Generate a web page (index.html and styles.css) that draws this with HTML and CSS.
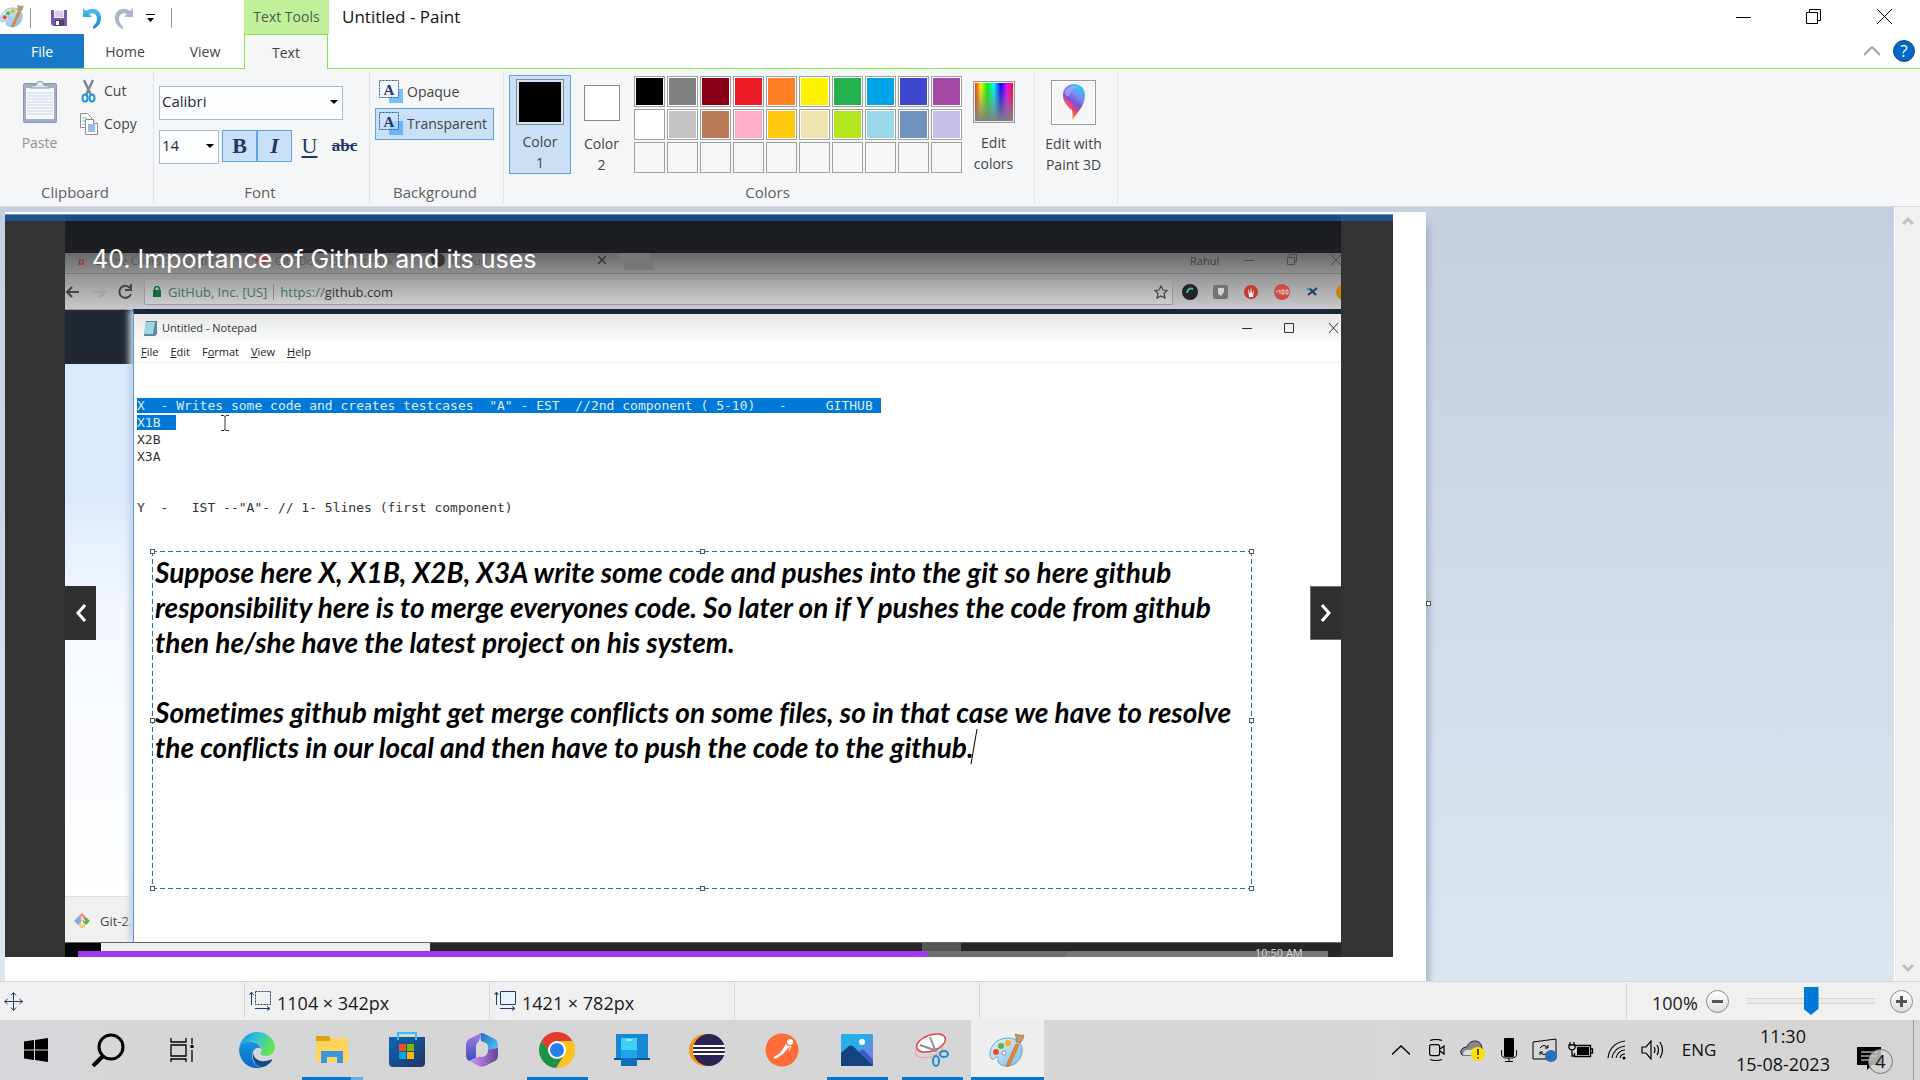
FILE: index.html
```html
<!DOCTYPE html>
<html lang="en">
<head>
<meta charset="utf-8">
<title>Untitled - Paint</title>
<link rel="stylesheet" href="styles.css">
</head>
<body>
<svg class="defs" aria-hidden="true">
  <defs>
    <linearGradient id="pal" x1="0" y1="0" x2="1" y2="1"><stop offset="0" stop-color="#eaf6fc"/><stop offset="1" stop-color="#7fb9dc"/></linearGradient>
    <linearGradient id="blueUp" x1="0" y1="0" x2="0" y2="1"><stop offset="0" stop-color="#4fc1f5"/><stop offset="1" stop-color="#0b80d3"/></linearGradient>
    <symbol id="palette" viewBox="0 0 36 34">
      <path d="M1 21C1 12 9 5 19 5s15 6 14 14c-1 9-8 14-15 14-5 0-9-2-9-5 0-2 1-4-1-4s-3 3-5 2-2-3-2-5z" fill="url(#pal)" stroke="#6aa5c8"/>
      <circle cx="7" cy="19" r="3" fill="#e8483c"/><circle cx="12" cy="13" r="3" fill="#53b848"/><circle cx="19" cy="10" r="3" fill="#f6b21b"/><circle cx="15" cy="20" r="2" fill="#fff" stroke="#88b"/>
      <path d="M27 11l3 1-10 21-2 1 0-3z" fill="#ee8a2c" stroke="#b9601a" stroke-width=".7"/>
      <path d="M26 1q5 2 9 1-1 6-4 8l-4-1q1-4-1-8z" fill="#c89a68" stroke="#8c6238" stroke-width=".6"/>
    </symbol>
  </defs>
</svg>
<div class="app">
  <header class="titlebar">
    <div class="quick">
      <svg class="app-icon" width="24" height="24"><use href="#palette"/></svg>
      <span class="bar"></span>
      <button class="qa save" aria-label="Save"><svg width="16" height="16" viewBox="0 0 16 16"><path d="M0 0h16v16H2l-2-2z" fill="#7d55b0"/><path d="M3 0h10v8H3z" fill="#f3f0fa"/><path d="M4 2h8M4 4h8M4 6h8" stroke="#b9acd4"/><path d="M4 10h9v6H4z" fill="#4f4470"/><path d="M5 11h3v4H5z" fill="#fff"/></svg></button>
      <button class="qa" aria-label="Undo"><svg width="20" height="22" viewBox="0 0 20 22"><path d="M1 1v9h9L7 7c4-2 8 0 8 5 0 4-3 6-4 8v2c5-2 8-6 8-11C19 3 11-1 4 4z" fill="url(#blueUp)"/></svg></button>
      <button class="qa" aria-label="Redo"><svg width="20" height="22" viewBox="0 0 20 22"><path d="M19 1v9h-9l3-3C9 5 5 7 5 12c0 4 3 6 4 8v2C4 20 1 16 1 11 1 3 9-1 16 4z" fill="#aab6cc"/></svg></button>
      <button class="qa more" aria-label="Customize Quick Access Toolbar"><svg width="9" height="8" viewBox="0 0 9 8"><path d="M0 0h9v1H0zM1 4h7L4.500 8z" fill="#000"/></svg></button>
      <span class="bar"></span>
    </div>
    <div class="context-title">Text Tools</div>
    <h1>Untitled - Paint</h1>
    <div class="win-buttons">
      <button aria-label="Minimize"><svg width="15" height="15"><path d="M0 8.500h15" stroke="#000"/></svg></button>
      <button aria-label="Restore"><svg width="15" height="15" fill="none" stroke="#000"><path d="M.5 3.500h11v11H.5zM3.500 3.500v-3h11v11h-3"/></svg></button>
      <button aria-label="Close"><svg width="15" height="15" stroke="#000"><path d="M0 0l15 15M15 0L0 15"/></svg></button>
    </div>
  </header>
  <nav class="tabs">
    <button class="file">File</button>
    <button>Home</button>
    <button>View</button>
    <button class="active">Text</button>
    <div class="tab-tools">
      <button aria-label="Minimize the Ribbon"><svg width="16" height="10" fill="none" stroke="#a5a5a5" stroke-width="2"><path d="M0 9l8-8 8 8"/></svg></button>
      <button class="help" aria-label="Help">?</button>
    </div>
  </nav>

  <section class="ribbon">
    <div class="group clipboard">
      <div class="group-body">
        <button class="big paste" disabled>
          <svg width="34" height="42" viewBox="0 0 34 42"><rect x=".5" y="2.500" width="33" height="39" rx="1" fill="#9fadc6" stroke="#8997b2"/><path d="M3 7h28v31H3z" fill="#f5f8fd"/><path d="M4 12h26M4 15h26M4 18h26M4 21h26M4 24h26M4 27h26M4 30h26M4 33h26" stroke="#ccd6e6"/><path d="M7 7q1-3 6-3 1-4 4-4t4 4q5 0 6 3z" fill="#dfe6f1" stroke="#8192ae"/></svg>
          <span>Paste</span>
        </button>
        <div class="stack">
          <button class="small"><svg width="20" height="24" viewBox="0 0 20 24"><path d="M5 1l7 15M14 1L7 16" stroke="#7e8794" stroke-width="2.500"/><ellipse cx="6" cy="19" rx="2.500" ry="3.500" fill="none" stroke="#1e96dc" stroke-width="2"/><ellipse cx="13" cy="19" rx="2.500" ry="3.500" fill="none" stroke="#1e96dc" stroke-width="2"/></svg>Cut</button>
          <button class="small"><svg width="20" height="24" viewBox="0 0 20 24" fill="#fff" stroke="#8d8d8d"><path d="M1.500 1.500h7l4 4v10h-11z"/><path d="M3 6h5M3 9h5M3 12h4" stroke="#79aee0"/><path d="M6.500 7.500h8l4 4v11h-12z"/><path d="M14.500 7.500v4h4"/><path d="M9 13h7M9 15h7M9 17h7M9 19h7" stroke="#2a7fd0"/></svg>Copy</button>
        </div>
      </div>
      <h2>Clipboard</h2>
    </div>

    <div class="group font">
      <div class="group-body column">
        <label class="combo family"><select aria-label="Font family"><option>Calibri</option></select></label>
        <div class="row">
          <label class="combo size"><select aria-label="Font size"><option>14</option></select></label>
          <div class="toggles">
            <button class="glyph bold on" aria-pressed="true">B</button>
            <button class="glyph italic on" aria-pressed="true">I</button>
            <button class="glyph under" aria-pressed="false">U</button>
            <button class="glyph strike" aria-pressed="false">abc</button>
          </div>
        </div>
      </div>
      <h2>Font</h2>
    </div>

    <div class="group background">
      <div class="group-body column">
        <button class="mode" aria-pressed="false"><svg width="24" height="24" viewBox="0 0 24 24"><path d="M10 9h14v14H10z" fill="#7cbdfb"/><rect x=".5" y=".5" width="19" height="17" fill="#f5f9fe" stroke="#1b5f9e" stroke-dasharray="2 1"/><text x="10" y="15" text-anchor="middle" class="serif-a">A</text></svg>Opaque</button>
        <button class="mode on" aria-pressed="true"><svg width="24" height="24" viewBox="0 0 24 24"><path d="M10 9h14v14H10z" fill="#6db6fb"/><rect x=".5" y=".5" width="19" height="17" fill="#cfe3fb" fill-opacity=".6" stroke="#1b5f9e" stroke-dasharray="2 1"/><text x="10" y="15" text-anchor="middle" class="serif-a">A</text></svg>Transparent</button>
      </div>
      <h2>Background</h2>
    </div>

    <div class="group colors">
      <div class="group-body">
        <button class="big color-one on"><span class="swatch black"></span><span>Color<br>1</span></button>
        <button class="big color-two"><span class="swatch white"></span><span>Color<br>2</span></button>
        <div class="palette">
          <button class="c1" aria-label="Black"></button><button class="c2" aria-label="Gray"></button><button class="c3" aria-label="Dark red"></button><button class="c4" aria-label="Red"></button><button class="c5" aria-label="Orange"></button><button class="c6" aria-label="Yellow"></button><button class="c7" aria-label="Green"></button><button class="c8" aria-label="Turquoise"></button><button class="c9" aria-label="Indigo"></button><button class="c10" aria-label="Purple"></button>
          <button class="c11" aria-label="White"></button><button class="c12" aria-label="Light gray"></button><button class="c13" aria-label="Brown"></button><button class="c14" aria-label="Rose"></button><button class="c15" aria-label="Gold"></button><button class="c16" aria-label="Light yellow"></button><button class="c17" aria-label="Lime"></button><button class="c18" aria-label="Light turquoise"></button><button class="c19" aria-label="Blue-gray"></button><button class="c20" aria-label="Lavender"></button>
          <button class="empty" aria-label="Custom 1"></button><button class="empty" aria-label="Custom 2"></button><button class="empty" aria-label="Custom 3"></button><button class="empty" aria-label="Custom 4"></button><button class="empty" aria-label="Custom 5"></button><button class="empty" aria-label="Custom 6"></button><button class="empty" aria-label="Custom 7"></button><button class="empty" aria-label="Custom 8"></button><button class="empty" aria-label="Custom 9"></button><button class="empty" aria-label="Custom 10"></button>
        </div>
        <button class="big edit"><span class="rainbow"></span><span>Edit<br>colors</span></button>
      </div>
      <h2>Colors</h2>
    </div>

    <div class="group paint3d">
      <div class="group-body">
        <button class="big p3d"><span class="p3d-frame"><svg width="26" height="37" viewBox="0 0 26 37"><defs><linearGradient id="drop" x1=".7" y1="0" x2=".3" y2="1"><stop offset="0" stop-color="#1fd0f2"/><stop offset=".3" stop-color="#7b8cf5"/><stop offset=".5" stop-color="#7a55d8"/><stop offset=".7" stop-color="#e2456f"/><stop offset="1" stop-color="#fbb000"/></linearGradient></defs><path d="M11 0c7 0 11 5 11 11 0 9-5 15-13 25 1-5 1-8-1-12C4 20 0 17 0 11 0 5 4 0 11 0z" transform="translate(2)" fill="url(#drop)"/><path d="M2 14c2 6 6 9 8 12 3-5-1-10-8-12z" fill="#f04a78"/><path d="M4 8c3-6 9-7 13-5-5 1-8 5-9 9-2 1-4 0-4-4z" fill="#b29cf8" opacity=".8"/></svg></span><span>Edit with<br>Paint 3D</span></button>
      </div>
    </div>
  </section>

  <main class="workspace">
    <div class="scroll-area">
      <div class="sheet">
        <div class="shot">
          <div class="video">
            <div class="browser">
              <div class="browser-top"></div>
              <div class="browser-tabs">
                <span class="udemy">u</span><span class="tab-name one">Online Courses - Anytime</span>
                <svg width="14" height="14" viewBox="0 0 14 14"><path d="M7 0l7 7-7 7-7-7z" fill="#9a4a40"/></svg><span class="tab-name two">Git - Downloading Pack</span>
                <svg width="14" height="14" viewBox="0 0 14 14"><circle cx="7" cy="7" r="7" fill="#333"/></svg><span class="tab-name three">GitHub</span>
                <svg class="tab-x" width="8" height="14" stroke="#333" stroke-width="1.500"><path d="M0 3l8 8M8 3l-8 8"/></svg>
                <span class="new-tab"></span>
                <span class="user">Rahul</span>
                <svg class="ctl" width="108" height="16" viewBox="0 0 108 16" fill="none" stroke="#4a4a4c"><path d="M0 7.500h10M43.500 4.500h7v7h-7zM45.500 4.500v-3h7v7h-2M87 2l10 10M97 2L87 12"/></svg>
              </div>
              <div class="address-row">
                <svg width="72" height="20" viewBox="0 0 72 20" fill="none" stroke="#444" stroke-width="2"><path d="M14 10H2M7 5l-5 5 5 5"/><path d="M28 10h12M35 5l5 5-5 5" stroke="#a2a2a4"/><path d="M65 6a6 6 0 1 0 1 6M66 2v6h-6"/></svg>
                <div class="address">
                  <svg width="8" height="11" viewBox="0 0 8 11"><path d="M0 4h8v7H0z" fill="#14693c"/><path d="M1.500 5V3a2.500 2.500 0 0 1 5 0v2" fill="none" stroke="#14693c" stroke-width="1.500"/></svg>
                  <span class="owner">GitHub, Inc. [US]</span><span class="divider"></span><span class="url"><i>https://</i>github.com</span>
                  <svg class="star" width="14" height="14" viewBox="0 0 14 14"><path d="M7 1l2 4 4 .5-3 3 1 4.500-4-2-4 2 1-4.500-3-3 4-.5z" fill="none" stroke="#444" stroke-width="1.200"/></svg>
                </div>
                <svg class="exts" width="166" height="18" viewBox="0 0 166 18"><circle cx="9" cy="9" r="8" fill="#25222b"/><path d="M6 10q1-6 6-4" stroke="#35c3a0" stroke-width="2" fill="none"/><rect x="32" y="2" width="15" height="14" rx="2" fill="#737375"/><path d="M37 5h6v4l-3 4-3-2z" fill="#d3d3d5"/><circle cx="70" cy="9" r="7" fill="#c3382f"/><path d="M67 5l2 6 1-7 1 7 2-4-1 7h-4z" fill="#fff"/><circle cx="101" cy="9" r="8" fill="#c94d48"/><path d="M95 9l4-2v4M101 7h2v4h-2zM105 7h2v4h-2z" stroke="#eec9c6" fill="none"/><path d="M126 6h3l3 3" stroke="#2b8fd0" stroke-width="2" fill="none"/><path d="M127 12l9-7M129 6l6 6" stroke="#223f5c" stroke-width="2" fill="none"/><circle cx="163" cy="9" r="8" fill="#c58215"/></svg>
              </div>
              <div class="browser-page"></div>
              <div class="downloads"><svg width="16" height="16" viewBox="0 0 16 16"><path d="M8 0l4 4-4 4-4-4z" fill="#e88b80"/><path d="M4 4l4 4-4 4-4-4z" fill="#7fa4e8"/><path d="M12 4l4 4-4 4-4-4z" fill="#71a862"/><path d="M8 8l4 4-4 4-4-4z" fill="#f0cf80"/><path d="M8 3v9M8 5l3 3" stroke="#fff"/></svg>Git-2.</div>
            </div>
            <div class="notepad">
              <div class="np-title">
                <svg width="15" height="15" viewBox="0 0 15 15"><path d="M3 0h11v13l-2 2H1z" fill="#5d8796"/><path d="M3 1h9l-2 12H1z" fill="#9fd4e4"/></svg>
                <span>Untitled - Notepad</span>
                <svg class="ctl" width="96" height="12" viewBox="0 0 96 12" fill="none" stroke="#333"><path d="M0 6.500h10M42.500 1.500h9v9h-9zM87 1l9 10M96 1l-9 10"/></svg>
              </div>
              <div class="np-menu"><span><u>F</u>ile</span><span><u>E</u>dit</span><span>F<u>o</u>rmat</span><span><u>V</u>iew</span><span><u>H</u>elp</span></div>
<pre class="np-text"><mark>X  - Writes some code and creates testcases  "A" - EST  //2nd component ( 5-10)   -     GITHUB </mark>
<mark>X1B  </mark>
X2B
X3A


Y  -   IST --"A"- // 1- 5lines (first component)</pre>
            </div>
            <svg class="ibeam" width="8" height="16" fill="none" stroke="#333"><path d="M0 .5h3l1 1 1-1h3M4 1v14M0 15.500h3l1-1 1 1h3"/></svg>
            <div class="rec-taskbar"><span class="rec-start"></span><span class="rec-search"></span><span class="rec-window"></span><span class="rec-clock">10:50 AM</span></div>
            <div class="progress"><span class="played"></span><span class="buffered"></span><span class="rest"></span></div>
            <p class="lecture">40. Importance of Github and its uses</p>
            <button class="nav prev" aria-label="Previous"><svg width="10" height="18" fill="none" stroke="#fff" stroke-width="3"><path d="M9 1L2 9l7 8"/></svg></button>
            <button class="nav next" aria-label="Next"><svg width="10" height="18" fill="none" stroke="#fff" stroke-width="3"><path d="M1 1l7 8-7 8"/></svg></button>
          </div>
        </div>

        <div class="textbox">
          <textarea aria-label="Text" spellcheck="false">Suppose here X, X1B, X2B, X3A write some code and pushes into the git so here github
responsibility here is to merge everyones code. So later on if Y pushes the code from github
then he/she have the latest project on his system.

Sometimes github might get merge conflicts on some files, so in that case we have to resolve
the conflicts in our local and then have to push the code to the github.</textarea>
          <i class="h tl"></i><i class="h tc"></i><i class="h tr"></i><i class="h ml"></i><i class="h mr"></i><i class="h bl"></i><i class="h bc"></i><i class="h br"></i>
          <svg class="caret" width="8" height="35"><path d="M7 0L1 35" stroke="#000"/></svg>
        </div>
        <i class="h sheet-handle"></i>
      </div>
    </div>
    <div class="scrollbar">
      <button aria-label="Scroll up"><svg width="12" height="10" fill="none" stroke="#bfbfbf" stroke-width="3"><path d="M1 8l5-5 5 5"/></svg></button>
      <button aria-label="Scroll down"><svg width="12" height="10" fill="none" stroke="#bfbfbf" stroke-width="3"><path d="M1 2l5 5 5-5"/></svg></button>
    </div>
  </main>

  <footer class="status">
    <div class="cell"><svg width="19" height="19" viewBox="0 0 19 19" fill="none" stroke="#1f3d66"><path d="M9.500 1v17M1 9.500h17M7 3.500l2.500-3 2.500 3M7 15.500l2.500 3 2.500-3M3.500 7l-3 2.500 3 2.500M15.500 7l3 2.500-3 2.500"/></svg></div>
    <div class="cell"><svg width="22" height="20" viewBox="0 0 22 20" fill="none" stroke="#1f3d66"><path d="M2.500 14V2M.5 4l2-3 2 3M6 17.500h14M18 15.500l3 2-3 2"/><path d="M6.500.5h15v13h-15z" stroke-dasharray="2 1"/></svg><span>1104 × 342px</span></div>
    <div class="cell"><svg width="22" height="20" viewBox="0 0 22 20" fill="none" stroke="#1f3d66"><path d="M2.500 14V2M.5 4l2-3 2 3M6 17.500h14M18 15.500l3 2-3 2"/><path d="M6.500.5h15v13h-15z" fill="#e6f3f8"/></svg><span>1421 × 782px</span></div>
    <div class="cell"></div>
    <div class="cell wide"></div>
    <div class="zoom">
      <label for="zoom">100%</label>
      <button aria-label="Zoom out"><svg width="11" height="11"><path d="M0 5.500h11" stroke="#555" stroke-width="3"/></svg></button>
      <input id="zoom" type="range" min="0" max="100" value="50">
      <button aria-label="Zoom in"><svg width="11" height="11"><path d="M0 5.500h11M5.500 0v11" stroke="#555" stroke-width="3"/></svg></button>
    </div>
  </footer>
</div>

<footer class="taskbar">
  <div class="apps">
    <button class="start" aria-label="Start"><svg width="24" height="24" viewBox="0 0 24 24"><path d="M0 3.500L10 2v9.500H0zM11 2l13-2v11.500H11zM0 12.500h10V22L0 20.500zM11 12.500h13V24l-13-2z"/></svg></button>
    <button class="search" aria-label="Search"><svg width="34" height="34" viewBox="0 0 34 34" fill="none" stroke="#000"><circle cx="20" cy="14" r="12" stroke-width="3"/><path d="M12 23L2 33" stroke-width="4"/></svg></button>
    <button aria-label="Task View"><svg width="24" height="24" viewBox="0 0 24 24" fill="none" stroke="#000" stroke-width="1.300"><path d="M1 0v4h15V0M1 7h15v11H1zM1 24v-3h15v3M22 0v6M22 12v12"/><path d="M20.500 7h3v3h-3z" fill="#000" stroke="none"/></svg></button>
    <button aria-label="Microsoft Edge"><svg width="36" height="36" viewBox="0 0 36 36"><defs><linearGradient id="e1" x1="0" y1="0" x2="1" y2=".4"><stop offset="0" stop-color="#1a8fe0"/><stop offset=".5" stop-color="#2fc0d8"/><stop offset="1" stop-color="#66e457"/></linearGradient><linearGradient id="e2" x1="0" y1="0" x2="0" y2="1"><stop offset="0" stop-color="#1497e0"/><stop offset="1" stop-color="#0a66c2"/></linearGradient></defs><path d="M0 17C1 7 9 0 18 0c11 0 18 8 18 15 0 6-5 9-9 9-5 0-6-2-5-4 2-3 0-8-6-10-7-2-14 2-16 7z" fill="url(#e1)"/><path d="M0 17c2-6 8-8 13-7 5 0 9 4 9 7-3-3-9 0-9 7 0 6 5 11 10 12C9 38 0 29 0 17z" fill="url(#e2)"/><path d="M14 20c-2 8 4 16 10 15 5-1 9-6 9-7s-1-1-2 0c-8 3-17 0-17-8z" fill="#114a8d"/></svg></button>
    <button class="run multi" aria-label="File Explorer"><svg width="32" height="28" viewBox="0 0 32 28"><path d="M0 0h13l2 4v8H0z" fill="#e0a10a"/><path d="M0 5h13l3-3h16v24H0z" fill="#ffd35c"/><path d="M5 15h22v12h-6v-6H11v6H5z" fill="#3a96dd"/></svg></button>
    <button aria-label="Microsoft Store"><svg width="36" height="36" viewBox="0 0 36 36"><defs><linearGradient id="st" x1="0" y1="0" x2="1" y2="1"><stop offset="0" stop-color="#0a67b8"/><stop offset="1" stop-color="#24355e"/></linearGradient></defs><path d="M9 6V1h18v5" fill="none" stroke="#3bc0f3" stroke-width="2"/><path d="M0 5h36v26q0 4-4 4H4q-4 0-4-4z" fill="url(#st)"/><path d="M9 5v3M27 5v3" stroke="#3bc0f3" stroke-width="2"/><path d="M10 12h7v7h-7z" fill="#f25022"/><path d="M18 12h7v7h-7z" fill="#7fba00"/><path d="M10 20h7v7h-7z" fill="#00a4ef"/><path d="M18 20h7v7h-7z" fill="#ffb900"/></svg></button>
    <button aria-label="Microsoft 365"><svg width="32" height="34" viewBox="0 0 32 34"><defs><linearGradient id="m1" x1="0" y1="0" x2="0" y2="1"><stop offset="0" stop-color="#a77ae0"/><stop offset="1" stop-color="#3a4fc4"/></linearGradient><linearGradient id="m2" x1="0" y1="0" x2="1" y2="1"><stop offset="0" stop-color="#2a65c8"/><stop offset="1" stop-color="#54dcf8"/></linearGradient><linearGradient id="m3" x1="0" y1="0" x2="1" y2="0"><stop offset="0" stop-color="#cf9cf8"/><stop offset="1" stop-color="#64449c"/></linearGradient></defs><path d="M15 0L3 6Q0 8 0 11v12q0 3 3 5l7-3V13q0-3 3-5z" fill="url(#m1)"/><path d="M15 0q2 0 4 1l10 5q3 2 3 5v12l-10-5v-5q0-3-7-5-1-4 0-8z" fill="url(#m2)"/><path d="M32 15v8q0 3-3 5l-10 5q-3 1-6 0L3 28l11-5q7-1 8-6z" fill="url(#m3)"/><ellipse cx="16" cy="17" rx="6" ry="7" fill="#d6d6d6"/></svg></button>
    <button class="run" aria-label="Google Chrome"><svg width="36" height="36" viewBox="0 0 36 36"><path d="M2.400 9A18 18 0 0 1 33.600 9H18L9 18z" fill="#e33b2e"/><path d="M33.600 9A18 18 0 0 1 17 36l9-15-2-8-6-4z" fill="#fcc31e"/><path d="M2.400 9A18 18 0 0 0 17 36l8-13-9 3z" fill="#1f9246"/><circle cx="18" cy="18" r="9" fill="#fff"/><circle cx="18" cy="18" r="7" fill="#2b7cf0"/></svg></button>
    <button aria-label="Phone Link"><svg width="36" height="32" viewBox="0 0 36 32"><path d="M2 0h32v24H2z" fill="#1688d4"/><path d="M0 24h36v2H0z" fill="#0b4f86"/><path d="M7 4h16v28H7z" fill="#0f6fba"/><path d="M7 4h16v12H7z" fill="#3fd0f6"/><path d="M7 16h16v8H7z" fill="#20a2ea"/><path d="M12 6h6" stroke="#fff"/></svg></button>
    <button aria-label="Eclipse"><svg width="36" height="32" viewBox="0 0 36 32"><circle cx="16" cy="16" r="16" fill="#f7941e"/><circle cx="20" cy="16" r="16" fill="#2c2255"/><path d="M4 11h32v2H4zM4 15h32v2H4zM4 19h32v2H4z" fill="#fff"/></svg></button>
    <button aria-label="Postman"><svg width="34" height="34" viewBox="0 0 34 34"><circle cx="17" cy="17" r="16.500" fill="#ff6c37"/><circle cx="25" cy="9" r="3" fill="#fff"/><path d="M21 11l3 3-6 7-6 4-3 1v-2l6-4z" fill="#fff"/><path d="M23 14l3-1-2 5" fill="none" stroke="#fff"/></svg></button>
    <button class="run" aria-label="Photos"><svg width="32" height="32" viewBox="0 0 32 32"><defs><linearGradient id="ph" x1="0" y1="0" x2="1" y2="1"><stop offset=".4" stop-color="#27aee8"/><stop offset="1" stop-color="#9c6cdd"/></linearGradient></defs><rect width="32" height="32" rx="1" fill="url(#ph)"/><path d="M14 21l6-5q2-1 4 1l8 9v6H16z" fill="#3b5bc8"/><path d="M0 19l8-7q2-1 4 0l20 20H0z" fill="#15437f"/><circle cx="21" cy="8" r="3" fill="#fff"/></svg></button>
    <button class="run" aria-label="Snipping Tool"><svg width="34" height="34" viewBox="0 0 34 34" fill="none"><ellipse cx="14" cy="17" rx="14" ry="7" transform="rotate(-15 14 17)" stroke="#e8a2a2"/><ellipse cx="16" cy="10" rx="15" ry="8" transform="rotate(-20 16 10)" fill="#fff" stroke="#e04048" stroke-width="1.500"/><path d="M5 12l17 6M15 4l6 15" stroke="#8a8f96" stroke-width="2"/><ellipse cx="29" cy="21" rx="4" ry="3" stroke="#1b8ccc" stroke-width="2"/><ellipse cx="21" cy="28" rx="3" ry="5" stroke="#1b8ccc" stroke-width="2"/></svg></button>
    <button class="run current" aria-label="Paint"><svg width="36" height="34"><use href="#palette"/></svg></button>
  </div>
  <div class="tray">
    <span><svg width="18" height="10" fill="none" stroke="#000" stroke-width="1.300"><path d="M0 9.500L9 1l9 8.500"/></svg></span>
    <span><svg width="16" height="22" viewBox="0 0 16 22" fill="none" stroke="#000" stroke-width="1.200"><rect x=".6" y="5.600" width="10" height="11" rx="2"/><path d="M11 10l4-3v8l-4-3M1 1.500q6-2 12 0M1 20.500q6 2 12 0"/></svg></span>
    <span><svg width="26" height="22" viewBox="0 0 26 22"><path d="M2 16q-3-4 1-7 2-1 4-1 2-6 8-6t7 7q2 3 0 7z" fill="#888" stroke="#222"/><path d="M3 16q0-6 8-5l3-2q5-1 6 3v4z" fill="#ddd"/><circle cx="18" cy="15" r="7" fill="#ffe000"/><path d="M18 10v6M18 18v1.500" stroke="#222" stroke-width="1.500"/></svg></span>
    <span><svg width="16" height="24" viewBox="0 0 16 24"><rect x="3" width="10" height="19" rx="1"/><path d="M.6 12v4q0 4 5 4h5q5 0 5-4v-4M8 20v3M4 23.500h8" fill="none" stroke="#000"/></svg></span>
    <span><svg width="26" height="24" viewBox="0 0 26 24" fill="none" stroke="#000"><path d="M1 4l23-3v20H1z"/><path d="M8 10q4-5 8 0M16 7v3h-3M16 14q-4 5-8 0M8 17v-3h3"/><circle cx="19" cy="18" r="6" fill="#2a6fbb" stroke="none"/></svg></span>
    <span><svg width="26" height="18" viewBox="0 0 26 18"><path d="M7.500 4.500h15v11h-16V12M22.500 8h2v4h-2M2 1v3M6 1v3M1 4h6v3q-1 2-3 2t-3-2zM4 9v6h3" fill="none" stroke="#000" stroke-width="1.300"/><path d="M9 6h12v8H9z"/></svg></span>
    <span><svg width="20" height="20" viewBox="0 0 20 20" fill="none" stroke="#000" stroke-width="1.200"><path d="M1 18C2 8 9 2 18 1M5 18C6 11 11 7 18 6M9 18c1-5 5-8 9-8M13 18q1-4 5-4"/><circle cx="17" cy="18" r="1.500" fill="#000" stroke="none"/></svg></span>
    <span><svg width="24" height="20" viewBox="0 0 24 20" fill="none" stroke="#000" stroke-width="1.200"><path d="M1 7h4l5-6v18l-5-6H1zM13 7q2 3 0 6M16 5q3 5 0 10M19 2q5 8 0 16"/></svg></span>
    <span class="lang">ENG</span>
    <time>11:30<br>15-08-2023</time>
    <button class="notice" aria-label="4 notifications"><svg width="24" height="24" viewBox="0 0 24 24"><path d="M0 0h24v18h-9l-5 5v-5H0z"/><path d="M4 5h16M4 9h16M4 13h10" stroke="#fff"/></svg><b>4</b></button>
  </div>
</footer>
</body>
</html>
```
FILE: styles.css
```css
* { box-sizing: border-box; }
body {
  margin: 0;
  height: 100vh;
  display: flex;
  flex-direction: column;
  overflow: hidden;
  background: #fff;
  color: #444;
  font: 14px/20px "Open Sans", "Noto Sans", sans-serif;
}
button {
  padding: 0;
  border: 0;
  background: none;
  color: inherit;
  font: inherit;
}
svg { display: block; flex: none; }
.defs { position: absolute; width: 0; height: 0; }
h1, h2, p { margin: 0; font-weight: 400; }
.app { flex: 1; min-height: 0; display: flex; flex-direction: column; }

/* Title bar */
.titlebar { display: flex; height: 34px; color: #111; }
.quick { display: flex; align-items: center; width: 244px; padding-top: 2px; }
.app-icon { margin-top: -4px; }
.bar { width: 1px; height: 20px; margin-left: 6px; background: #9a9a9a; }
.qa { display: flex; margin-left: 12px; }
.qa.save { margin: 0 3px 0 20px; }
.more + .bar { margin-left: 16px; }
.context-title {
  width: 85px;
  padding-top: 7px;
  background: #c1ef9b;
  color: #4c6148;
  text-align: center;
}
h1 { padding: 7px 0 0 13px; font-size: 17px; line-height: 20px; }
.win-buttons { display: flex; margin-left: auto; }
.win-buttons button { display: flex; align-items: center; justify-content: center; width: 70px; height: 33px; }
.win-buttons button:last-child { width: 72px; }

/* Ribbon tabs */
.tabs { display: flex; height: 35px; border-bottom: 1px solid #86e345; }
.tabs > button { width: 82px; padding-top: 1px; }
.tabs > button.file { width: 84px; background: #1979ca; color: #fff; }
.tabs > button:nth-child(3) { width: 78px; }
.tabs > button.active { height: 35px; width: 84px; border: 1px solid #86e345; border-bottom: 0; background: #f5f6f8; }
.tab-tools { display: flex; align-items: center; gap: 13px; margin-left: auto; padding-right: 5px; }
.help { width: 22px; height: 22px; border-radius: 50%; border: 1px solid #174a80; background: #0366c8; color: #fff; font-size: 17px; }

/* Ribbon */
.ribbon { display: flex; height: 138px; padding: 3px 0; background: #f5f6f8; border-bottom: 1px solid #d8dbe0; }
.group { display: flex; flex-direction: column; border-right: 1px solid #e1e3e6; }
.group-body { flex: 1; display: flex; align-items: flex-start; }
.group-body.column { flex-direction: column; }
.group h2 { height: 22px; padding-right: 3px; color: #606060; text-align: center; font-size: 15px; line-height: 22px; }
.clipboard { width: 154px; }
.font { width: 216px; }
.background { width: 134px; }
.colors { width: 531px; }
.paint3d { width: 83px; }
.big { display: flex; flex-direction: column; align-items: center; gap: 9px; line-height: 21px; }
.paste { width: 79px; padding-top: 9px; color: #929292; }
.stack { display: flex; flex-direction: column; padding-top: 7px; gap: 9px; }
.small { display: flex; align-items: center; gap: 5px; }
.font .group-body { padding: 14px 0 0 5px; gap: 10px; }
.row { display: flex; gap: 3px; }
.combo { position: relative; display: block; height: 34px; }
.combo::after { content: ""; position: absolute; right: 5px; top: 14px; border: 4px solid transparent; border-top-color: #000; }
.combo select { appearance: none; width: 100%; height: 100%; padding: 0 2px 5px; border: 1px solid #abbad2; border-radius: 0; background: #fcfdff; color: #1e2a3c; font: inherit; font-size: 15px; }
.family { width: 184px; }
.size { width: 60px; }
.toggles { display: flex; }
.glyph { width: 35px; height: 32px; color: #1f3864; font: 22px/30px "Liberation Serif", serif; }
.glyph.on { border: 1px solid #62a2e4; background: #c9e0f7; }
.bold { font-weight: 700; }
.italic { font-weight: 700; font-style: italic; }
.under { text-decoration: underline; text-underline-offset: 3px; }
.strike { font-size: 17px; font-weight: 700; text-decoration: line-through; }
.background .group-body { padding: 4px 0 0 5px; }
.mode { display: flex; align-items: center; gap: 4px; width: 119px; height: 32px; padding: 0 3px; border: 1px solid transparent; }
.mode.on, .big.on { border: 1px solid #62a2e4; background: #c9e0f7; }
.serif-a { font: 700 15px "Liberation Serif", serif; fill: #1f3864; }
.colors .group-body { padding: 3px 0 0 5px; }
.color-one { width: 62px; height: 99px; padding-top: 3px; gap: 6px; }
.color-two { width: 61px; padding-top: 10px; gap: 12px; }
.swatch { display: block; border: 1px solid #8a8a8a; }
.swatch.black { width: 48px; height: 48px; background: #000; box-shadow: inset 0 0 0 2px #d4e4f6; }
.swatch.white { width: 36px; height: 36px; background: #fff; }
.palette { display: grid; grid-template-columns: repeat(10, 31px); grid-auto-rows: 31px; gap: 2px; margin: 1px 0 0 2px; }
.palette button { border: 1px solid #a0a0a0; box-shadow: inset 0 0 0 1px #fff; }
.palette .empty { box-shadow: none; }
.c1 { background: #000; } .c2 { background: #7f7f7f; } .c3 { background: #880015; } .c4 { background: #ed1c24; } .c5 { background: #ff7f27; }
.c6 { background: #fff200; } .c7 { background: #22b14c; } .c8 { background: #00a2e8; } .c9 { background: #3f48cc; } .c10 { background: #a349a4; }
.c11 { background: #fff; } .c12 { background: #c3c3c3; } .c13 { background: #b97a57; } .c14 { background: #ffaec9; } .c15 { background: #ffc90e; }
.c16 { background: #efe4b0; } .c17 { background: #b5e61d; } .c18 { background: #99d9ea; } .c19 { background: #7092be; } .c20 { background: #c8bfe7; }
.edit { width: 63px; padding-top: 6px; }
.rainbow {
  width: 42px; height: 42px; border: 1px solid #999; box-shadow: inset 0 0 0 1px #eee;
  background: linear-gradient(transparent, #808080), linear-gradient(90deg, red, #ff0 17%, #0f0 33%, #0ff 50%, #00f 67%, #f0f 83%, red);
}
.p3d { width: 77px; padding: 8px 0 0; gap: 8px; }
.p3d-frame { display: flex; align-items: center; justify-content: center; width: 45px; height: 45px; border: 1px solid #999; background: #f5f5f5; box-shadow: inset 0 0 0 1px #fff; }

/* Workspace */
.workspace { flex: 1; min-height: 0; display: flex; }
.scroll-area { flex: 1; min-width: 0; overflow: hidden; padding: 5px; background: linear-gradient(#c6cfe0, #dce6f2); }
.scrollbar { display: flex; flex-direction: column; justify-content: space-between; width: 26px; padding: 9px 0 8px; border-left: 1px solid #fff; background: #f0f0f0; }
.scrollbar button { display: flex; justify-content: center; }
.sheet { position: relative; width: 1421px; height: 782px; padding-top: 2px; background: #fff; box-shadow: 8px 8px 6px -4px #a8b6cc; }
.shot { width: 1388px; height: 743px; padding: 0 52px 0 60px; background: linear-gradient(#5b8fd0 1px, #25528e 1px, #25528e 7px, #333 7px); }
.video { position: relative; height: 743px; overflow: hidden; background: #fff; }
.h { position: absolute; width: 5px; height: 5px; border: 1px solid #555; background: #fff; }
.sheet-handle { right: -5px; top: 389px; }

/* Recorded desktop */
.browser { position: absolute; inset: 0 0 15px; display: flex; flex-direction: column; }
.browser-top { height: 39px; background: linear-gradient(#5b8fd0 1px, #1b4a87 1px, #1b4a87 7px, #191c21 7px, #1e1f23); }
.browser-tabs { display: flex; align-items: flex-start; height: 21px; padding-left: 13px; overflow: hidden; background: linear-gradient(#696969, #8d8d8f); color: #555557; font-size: 11px; line-height: 16px; border-bottom: 1px solid #777; }
.udemy { width: 10px; color: #953c35; font-weight: 700; font-style: italic; }
.tab-name { margin-left: 6px; overflow: hidden; white-space: nowrap; }
.one { width: 161px; }
.two { width: 156px; }
.three { width: 147px; }
.tab-x { margin-right: 16px; }
.new-tab { width: 30px; height: 17px; background: #777; transform: skewX(20deg); }
.user { margin-left: auto; width: 54px; color: #3f3f41; }
.browser-tabs .ctl { margin-right: -11px; }
.address-row { display: flex; align-items: center; height: 36px; background: linear-gradient(#939395, #c9c9cb); border-bottom: 1px solid #999; }
.address { flex: 1; display: flex; align-items: center; height: 26px; margin-left: 7px; padding: 0 4px 0 8px; border: 1px solid #98989a; border-radius: 2px; background: linear-gradient(#a3a3a5, #cdcdcf); font-size: 13px; }
.owner { margin-left: 7px; color: #3f7458; }
.divider { width: 1px; height: 16px; margin: 0 6px; background: #888; }
.url { color: #333; }
.url i { color: #3f7458; font-style: normal; }
.star { margin-left: auto; }
.exts { margin: 0 -6px 0 8px; }
.browser-page { flex: 1; background: linear-gradient(#222832 54px, #dbe9fd 54px, #dbe9fd 180px, #f4f8ff 300px, #fff); }
.downloads { display: flex; align-items: center; gap: 10px; height: 46px; padding: 2px 0 0 9px; border-top: 1px solid #ddd; background: #f0f0f0; font-size: 13px; }
.notepad { position: absolute; left: 68px; right: 0; top: 95px; bottom: 15px; background: #fff; border-top: 5px solid #1b2635; border-left: 1px solid #5b9bd5; box-shadow: -4px 0 6px #c5d2e6; }
.np-title { display: flex; align-items: center; gap: 4px; height: 28px; padding-left: 9px; background: linear-gradient(#e6e9e8, #fafafa); color: #333; font-size: 11px; }
.np-title .ctl { margin: 0 3px 0 auto; }
.np-menu { display: flex; gap: 12px; height: 21px; padding-left: 7px; border-bottom: 1px solid #eee; color: #222; font-size: 11px; line-height: 19px; }
.np-text { margin: 34px 0 0 3px; color: #333; font: 13px/17px "DejaVu Sans Mono", "Liberation Mono", monospace; }
.np-text mark { background: #0078d7; color: #d9edff; }
.ibeam { position: absolute; left: 156px; top: 201px; }
.rec-taskbar { position: absolute; left: 0; right: 0; bottom: 0; height: 15px; display: flex; background: #262626; border-top: 1px solid #666; }
.rec-start { width: 36px; background: #050608; }
.rec-search { width: 329px; background: #eee; }
.rec-window { width: 39px; margin-left: 492px; background: #555; }
.rec-clock { margin-left: auto; width: 86px; height: 14px; overflow: hidden; color: #e0e0e0; font-size: 11px; line-height: 19px; }
.progress { position: absolute; left: 13px; bottom: 0; width: 1250px; height: 6px; display: flex; }
.played { width: 849px; background: #a435f0; }
.buffered { width: 140px; background: #6a6f73; }
.rest { flex: 1; background: #c6c8c7; opacity: .5; }
.lecture { position: absolute; left: 27px; top: 29px; color: #fff; font: 25px/32px "Inter", sans-serif; }
.nav { position: absolute; top: 372px; width: 31px; height: 54px; display: flex; align-items: center; justify-content: center; background: #2d2f31; }
.prev { left: 0; }
.next { right: 0; border: 1px solid #6a6f73; border-right: 0; }

/* Text being placed on the canvas */
.textbox {
  position: absolute; left: 147px; top: 339px; width: 1100px; height: 338px; padding: 1px;
  background:
    repeating-linear-gradient(90deg, #0a78d0 0 5px, transparent 5px 8px) top / 100% 1px no-repeat,
    repeating-linear-gradient(90deg, #0a78d0 0 5px, transparent 5px 8px) bottom / 100% 1px no-repeat,
    repeating-linear-gradient(#0a78d0 0 5px, transparent 5px 8px) left / 1px 100% no-repeat,
    repeating-linear-gradient(#0a78d0 0 5px, transparent 5px 8px) right / 1px 100% no-repeat;
}
.textbox textarea {
  display: block; width: 100%; height: 100%; padding: 3px 0 0 2px; border: 0; outline: 0; resize: none; overflow: hidden;
  background: none; color: #000; white-space: pre; font: italic 700 28px/35px "Lato", sans-serif; font-variant-ligatures: none;
}
.tl { left: -2px; top: -2px; } .tc { left: 548px; top: -2px; } .tr { right: -2px; top: -2px; }
.ml { left: -2px; top: 167px; } .mr { right: -2px; top: 167px; }
.bl { left: -2px; bottom: -2px; } .bc { left: 548px; bottom: -2px; } .br { right: -2px; bottom: -2px; }
.caret { position: absolute; left: 818px; top: 178px; }

/* Status bar */
.status { display: flex; height: 39px; padding: 1px 0; border-top: 1px solid #d7d7d7; background: #f0f0f0; color: #1a1a1a; font-size: 18px; }
.cell { display: flex; align-items: center; gap: 6px; width: 245px; padding-left: 4px; border-right: 1px solid #d7d7d7; }
.cell span { padding-top: 3px; }
.cell.wide { flex: 1; }
.zoom { display: flex; align-items: center; width: 293px; padding-left: 25px; }
.zoom label { width: 54px; padding-top: 3px; }
.zoom button { display: flex; align-items: center; justify-content: center; width: 23px; height: 23px; border: 1px solid #8a8a8a; border-radius: 50%; background: linear-gradient(#fff, #ddd); }
.zoom input { appearance: none; width: 128px; height: 28px; margin: 0 15px 0 18px; background: linear-gradient(#e7eaea, #e7eaea) center / 100% 4px no-repeat, linear-gradient(#d0d3d3, #d0d3d3) center / 100% 6px no-repeat; }
.zoom input::-webkit-slider-thumb { appearance: none; width: 15px; height: 28px; background: #0078d7; clip-path: polygon(0 0, 100% 0, 100% 78%, 50% 100%, 0 78%); }

/* Taskbar */
.taskbar { display: flex; justify-content: space-between; height: 60px; background: linear-gradient(90deg, #d5d7da, #d5d5d5 20%, #d6d6d7 65%, #d7d5d8 80%, #d5d5d5); color: #111; }
.apps { display: flex; }
.apps button { position: relative; display: flex; align-items: center; justify-content: center; width: 75px; height: 60px; }
.apps .start, .apps .search { width: 72px; }
.run::after { content: ""; position: absolute; left: 8px; right: 6px; bottom: 0; height: 3px; background: #0078d7; }
.multi::after { background: linear-gradient(90deg, #0078d7 80%, #66ade8 80%); }
.apps .current { background: linear-gradient(#eee, #eee) 2px 0 / 73px no-repeat; }
.current::after { left: 2px; right: 0; }
.tray { display: flex; align-items: center; padding-right: 6px; }
.tray > span { display: flex; align-items: center; justify-content: center; width: 36px; }
.tray > .lang { width: 56px; font-size: 17px; }
time { width: 112px; text-align: center; font-size: 18px; line-height: 28px; }
.notice { position: relative; width: 75px; height: 60px; padding: 17px 0 0 18px; border-right: 1px solid #999; }
.notice b { position: absolute; left: 29px; top: 29px; width: 25px; height: 25px; border: 1px solid #777; border-radius: 50%; background: #d5d5d5cc; color: #111; font-size: 18px; font-weight: 400; line-height: 23px; }
```
